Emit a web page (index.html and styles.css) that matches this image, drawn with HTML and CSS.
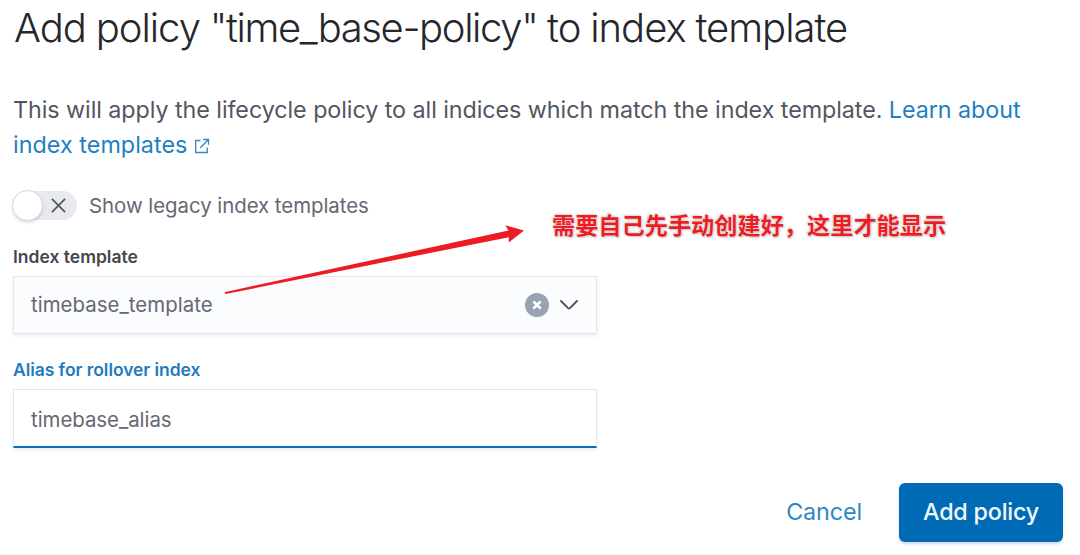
FILE: index.html
```html
<!DOCTYPE html>
<html lang="en">
<head>
<meta charset="utf-8">
<title>Add policy to index template</title>
<link rel="stylesheet" href="styles.css">
</head>
<body>
<main class="modal">
  <h1 class="title">Add policy <span class="policy-name">"time_base-policy"</span> to index template</h1>
  <p class="description">This will apply the lifecycle policy to all indices which match the index template. <a class="link">Learn about<br><span class="link-end">index templates</span><svg class="external" viewBox="0 0 16 16"><path d="M6.5 2.5H1.7v12h11.6V9.6M9.3 1.5h5.2v5.2M14.3 1.7 6.3 9.7"/></svg></a></p>
  <div class="switch-row">
    <span class="switch"><span class="thumb"></span><svg class="cross" viewBox="0 0 16 16"><path d="M1 1l14 14M15 1 1 15"/></svg></span>
    <span class="switch-label">Show legacy index templates</span>
  </div>
  <label class="label">Index template</label>
  <div class="field combo">
    <span class="value">timebase_template</span>
    <svg class="clear" viewBox="0 0 24 24"><circle cx="12" cy="12" r="12"/><path d="M8.3 8.3l7.4 7.4M15.7 8.3l-7.4 7.4"/></svg>
    <svg class="chevron" viewBox="0 0 18 10"><path d="M1 1l7.1 7.2q.9.8 1.8 0L17 1"/></svg>
  </div>
  <label class="label label-focused">Alias for rollover index</label>
  <div class="field focused"><span class="value">timebase_alias</span></div>
  <footer class="actions">
    <span class="cancel">Cancel</span>
    <button class="submit">Add policy</button>
  </footer>
</main>
<svg class="arrow" viewBox="0 0 1080 555"><path d="M224.5 292.2 508.5 230.5 505.3 225.2 524 230.6 508.8 242.5 508.8 237.2 225.5 294Z"/></svg>
<span class="note">需要自己先手动创建好，这里才能显示</span>
</body>
</html>
```
FILE: styles.css
```css
* { box-sizing: border-box; }
body {
  margin: 0;
  width: 1080px;
  height: 555px;
  position: relative;
  overflow: hidden;
  background: #fff;
  color: #343741;
  font-family: Inter, "Liberation Sans", sans-serif;
}
.modal { display: flex; flex-direction: column; padding: 4px 17px 0 14px; }
.title {
  margin: 0;
  font-size: 40px;
  font-weight: 300;
  line-height: 48px;
  letter-spacing: -1px;
  word-spacing: -0.5px;
  white-space: nowrap;
  color: #25272d;
}
.policy-name { letter-spacing: -1.38px; }
.description {
  margin: 40px 0 0 -1px;
  font-size: 23.3px;
  line-height: 35px;
  letter-spacing: -0.055px;
  white-space: nowrap;
  color: #535661;
}
.link { color: #1f7fc2; }
.link-end { letter-spacing: 0.05px; }
.external { width: 16px; height: 16px; margin-left: 7px; vertical-align: -1px; fill: none; stroke: #3389c6; stroke-width: 1.3; }
.switch-row { display: flex; align-items: center; height: 30px; margin: 28px 0 0 -1px; }
.switch {
  display: flex;
  align-items: center;
  justify-content: space-between;
  width: 64px;
  height: 29px;
  padding-right: 11px;
  border-radius: 15px;
  background: #e9eaef;
}
.thumb {
  width: 31px;
  height: 31px;
  margin-left: -1px;
  border: 1px solid #d5d7dd;
  border-radius: 50%;
  background: #fff;
  box-shadow: 0 2px 3px rgba(100, 105, 120, .2);
}
.cross { width: 15px; height: 15px; fill: none; stroke: #51545e; stroke-width: 1.8; }
.switch-label { margin-left: 12px; font-size: 20.4px; letter-spacing: -0.03px; color: #656873; white-space: nowrap; }
.label { margin: 25px 0 0 -1px; font-size: 17.5px; font-weight: 600; line-height: 24px; color: #43464f; }
.field {
  display: flex;
  align-items: center;
  width: 584px;
  height: 59px;
  margin: 7px 0 0 -1px;
  padding: 0 19px 0 17px;
  border: 1px solid #e3e6f0;
  background: #fff;
  box-shadow: 0 2px 3px rgba(120, 125, 160, .14);
}
.combo { height: 58px; padding-right: 18px; background: #fbfcfe; }
.value { flex: 1; font-size: 20.4px; color: #656873; }
.combo .value { padding-bottom: 2px; letter-spacing: 0.04px; }
.clear { width: 24px; height: 24px; fill: #98a2b3; }
.clear path { fill: none; stroke: #fff; stroke-width: 2.6; }
.chevron { width: 18px; height: 10px; margin-left: 11px; fill: none; stroke: #4b4e58; stroke-width: 1.8; stroke-linecap: round; }
.label-focused { margin-top: 24px; letter-spacing: -0.06px; color: #1f7bbf; }
.focused { border-bottom: 2px solid #0a6cb5; }
.focused .value { padding-top: 2px; letter-spacing: -0.03px; }
.actions { display: flex; justify-content: flex-end; align-items: center; gap: 37px; margin-top: 35px; }
.cancel { padding-bottom: 2px; font-size: 23.3px; letter-spacing: -0.1px; color: #2f87c5; }
.submit {
  width: 164px;
  height: 59px;
  padding: 0 0 2px;
  border: 0;
  border-radius: 6px;
  background: #006bb4;
  color: #f0f7fc;
  font: 500 23.3px Inter, "Liberation Sans", sans-serif;
  letter-spacing: -0.2px;
  white-space: nowrap;
  box-shadow: 0 2px 3px rgba(0, 80, 150, .2);
}
.arrow { position: absolute; left: 0; top: 0; width: 1080px; height: 555px; fill: #ed1c24; pointer-events: none; }
.note {
  position: absolute;
  left: 552px;
  top: 207px;
  font: 700 23.2px/34px "Noto Sans CJK SC", sans-serif;
  color: #ed1c24;
  white-space: nowrap;
  text-shadow: 0 0 1px #fff, 0 0 1px #fff, 1px 1px 2px #bbb, -1px -1px 2px #ccc;
}
```
